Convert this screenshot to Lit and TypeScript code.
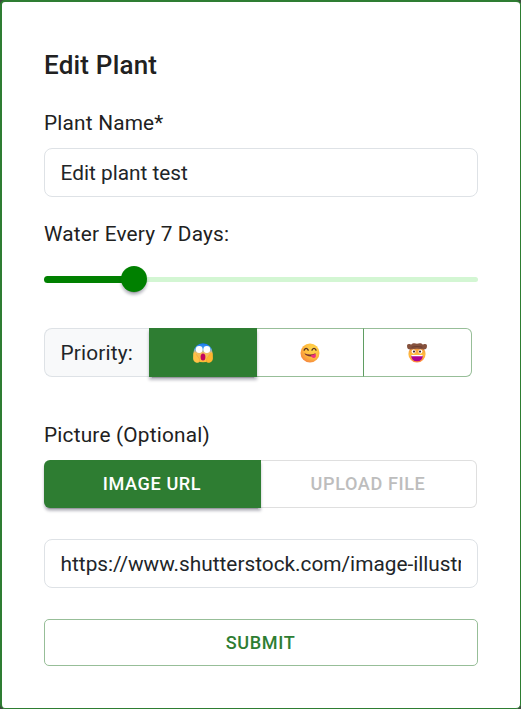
import { LitElement, html, css, svg } from "lit";
import { customElement, state } from "lit/decorators.js";
import { classMap } from "lit/directives/class-map.js";

const screaming = svg`
  <defs><linearGradient id="scare" x1="0" y1="0" x2="0" y2="1">
    <stop offset="0" stop-color="#1677f2"/><stop offset=".3" stop-color="#53a5ed"/>
    <stop offset=".5" stop-color="#f3bd61"/><stop offset="1" stop-color="#ffbd35"/>
  </linearGradient></defs>
  <circle cx="10" cy="9.8" r="9.5" fill="url(#scare)"/>
  <circle cx="6.2" cy="6.5" r="3.4" fill="#fff"/><circle cx="13.8" cy="6.5" r="3.4" fill="#fff"/>
  <path d="M.2 11.2C.4 9.4 2.8 9.4 3.2 11.2L5.2 14.2C7.4 16 7.4 19.6 4.8 19.8C2 19.8 0 17.8 .1 15Z" fill="#ffc247"/>
  <path d="M19.8 11.2C19.6 9.4 17.2 9.4 16.8 11.2L14.8 14.2C12.6 16 12.6 19.6 15.2 19.8C18 19.8 20 17.8 19.9 15Z" fill="#ffb52e"/>
  <path d="M3.2 11.2L5.2 14.2C6.6 15.6 6.8 17.6 6.1 19M16.8 11.2L14.8 14.2C13.4 15.6 13.2 17.6 13.9 19" fill="none" stroke="#f09a3a" stroke-width=".5"/>
  <ellipse cx="10" cy="14" rx="2.4" ry="3.5" fill="#c4055f"/>`;

const yum = svg`
  <defs><radialGradient id="sun" cx=".65" cy=".3" r=".75">
    <stop offset="0" stop-color="#ffd84d"/><stop offset=".6" stop-color="#ffb93d"/><stop offset="1" stop-color="#f5873f"/>
  </radialGradient></defs>
  <circle cx="10" cy="10" r="9.5" fill="url(#sun)"/>
  <path d="M4.2 7.1Q6.1 3.6 8.2 7.1M12 7.1Q14 3.6 16 7.1" fill="none" stroke="#563126" stroke-width="1.4" stroke-linecap="round"/>
  <path d="M4.4 10.2Q10 12.6 15.6 10.2C15.4 12.8 13 13.6 10.5 13.4C7.7 13.2 5.3 12.4 4.4 10.2Z" fill="#7a3430"/>
  <path d="M10.8 12.4Q13.2 12.2 15.4 10.8C16.6 13.2 15.6 15.2 13.8 14.9C12.2 14.6 11.4 13.8 10.8 12.4Z" fill="#f0307f"/>`;

const cowboy = svg`
  <defs><linearGradient id="warm" x1="0" y1="0" x2="0" y2="1">
    <stop offset="0" stop-color="#e98543"/><stop offset=".55" stop-color="#ffbd3e"/><stop offset="1" stop-color="#ff863e"/>
  </linearGradient></defs>
  <circle cx="10" cy="11" r="8.6" fill="url(#warm)"/>
  <path d="M.2 1.8C1.4 .4 3.6 1.6 4.4 1.6C5 .2 7.8-.2 10 .8C12.2-.2 15 .2 15.6 1.6C16.4 1.6 18.6 .4 19.8 1.8C20.6 5.6 18.4 7.2 15.5 6.3Q10 5.2 4.5 6.3C1.6 7.2-.6 5.6 .2 1.8Z" fill="#85513d"/>
  <path d="M4.6 4.2Q10 2.9 15.4 4.2" fill="none" stroke="#6b3d2f" stroke-width="1.1"/>
  <ellipse cx="6.6" cy="8.6" rx="2" ry="2.1" fill="#fff"/><ellipse cx="13.4" cy="8.6" rx="2" ry="2.1" fill="#fff"/>
  <circle cx="7" cy="8.6" r="1.1" fill="#4b2930"/><circle cx="13" cy="8.6" r="1.1" fill="#4b2930"/>
  <path d="M4 12H16Q15.5 18.3 10 18.3Q4.5 18.3 4 12Z" fill="#ad0090"/>
  <path d="M4.2 12H15.8L15.5 13.3H4.5Z" fill="#fff"/>`;

const priorities = [
  { name: "High", face: screaming },
  { name: "Medium", face: yum },
  { name: "Low", face: cowboy },
];

@customElement("app-root")
export class AppRoot extends LitElement {
  @state() private priority = 0;
  @state() private days = 7;

  static styles = css`
    :host {
      display: block;
      height: 709px;
      overflow: hidden;
      background: #3d4a3d;
      font-family: Roboto, "Noto Sans", sans-serif;
      color: #212121;
    }
    * { box-sizing: border-box; }
    button, input { font: inherit; margin: 0; }
    .card {
      height: 709px;
      border: solid #2e7d32;
      border-width: 2px 1px 1px 2px;
      border-radius: 5px;
      background: #fff;
      padding: 46px 42px 0;
      display: flex;
      flex-direction: column;
    }
    .title { margin: 0; font-size: 26px; line-height: 34px; font-weight: 500; letter-spacing: 0.2px; }
    .label { font-size: 20.8px; line-height: 32px; letter-spacing: 0.2px; }
    .name { margin-top: 25px; }
    .field {
      width: 434px;
      height: 49px;
      margin-top: 9px;
      padding: 0 16px 0 15.6px;
      border: 1px solid #dee2e6;
      border-radius: 8px;
      background: #fff;
      color: #212529;
      font-size: 20.8px;
      outline: none;
    }
    .water { margin-top: 21px; }
    .slider {
      width: 434px;
      height: 26px;
      margin-top: 16px;
      display: flex;
      align-items: center;
    }
    .done { width: 90px; height: 7px; border-radius: 4px 0 0 4px; background: #008000; }
    .rest { flex: 1; height: 5px; border-radius: 0 3px 3px 0; background: #d3f6d3; }
    .thumb {
      flex: none;
      width: 26px;
      height: 26px;
      margin: 0 -13px;
      border-radius: 50%;
      background: #008000;
      z-index: 1;
      box-shadow: 0 4px 1px -3px #0003, 0 3px 3px #0024, 0 1px 7px #0020;
    }
    .priority { display: flex; width: 428px; height: 49px; margin-top: 36px; }
    .addon {
      width: 105px;
      padding-left: 15.6px;
      border: 1px solid #dee2e6;
      border-right: 0;
      border-radius: 8px 0 0 8px;
      background: #f8f9fa;
      color: #212529;
      font-size: 20.8px;
      letter-spacing: 0.15px;
      line-height: 48px;
    }
    .choice {
      width: 107px;
      padding: 0;
      border: 1px solid #97be98;
      border-left: 0;
      border-right-color: #5f9d62;
      background: #fff;
      display: flex;
      align-items: center;
      justify-content: center;
    }
    .choice:last-child { width: 108px; border-radius: 0 6px 6px 0; border-right-color: #97be98; }
    .choice.active, .tab.active {
      background: #2e7d32;
      border: 0;
      color: #fff;
      z-index: 1;
      box-shadow: 0 4px 1px -3px #0003, 0 3px 3px #0024, 0 1px 7px #0020;
    }
    .choice.active { width: 108px; }
    .face { width: 20px; height: 20px; display: block; margin-right: 1px; }
    .picture { margin-top: 42px; }
    .tabs { display: flex; width: 433px; height: 48px; margin-top: 9px; }
    .tab {
      width: 216px;
      padding: 0 1px 2px 0;
      border: 1px solid #dfdfdf;
      border-left: 0;
      border-radius: 0 6px 6px 0;
      background: #fff;
      color: #bdbdbd;
      font-size: 18.1px;
      font-weight: 500;
      letter-spacing: 0.6px;
    }
    .tab.active { width: 217px; border-radius: 6px 0 0 6px; }
    .url { margin-top: 31px; }
    .submit {
      width: 434px;
      height: 47px;
      margin-top: 31px;
      padding: 0 1px 0 0;
      border: 1px solid #97be98;
      border-radius: 5px;
      background: #fff;
      color: #2e7d32;
      font-size: 18.1px;
      font-weight: 500;
      letter-spacing: 0.6px;
    }
  `;

  render() {
    return html`
      <div class="card">
        <h1 class="title">Edit Plant</h1>
        <div class="label name">Plant Name*</div>
        <input class="field" .value=${"Edit plant test"} />
        <div class="label water">Water Every ${this.days} Days:</div>
        <div class="slider">
          <div class="done"></div><div class="thumb"></div><div class="rest"></div>
        </div>
        <div class="priority">
          <div class="addon">Priority:</div>
          ${priorities.map(
            (p, i) => html`<button
              class=${classMap({ choice: true, active: this.priority === i })}
              aria-label=${p.name}
              @click=${() => (this.priority = i)}
            ><svg class="face" viewBox="0 0 20 20">${p.face}</svg></button>`
          )}
        </div>
        <div class="label picture">Picture (Optional)</div>
        <div class="tabs">
          <button class="tab active">IMAGE URL</button>
          <button class="tab">UPLOAD FILE</button>
        </div>
        <input class="field url" .value=${"https://www.shutterstock.com/image-illustration/"} />
        <button class="submit">SUBMIT</button>
      </div>
    `;
  }
}
